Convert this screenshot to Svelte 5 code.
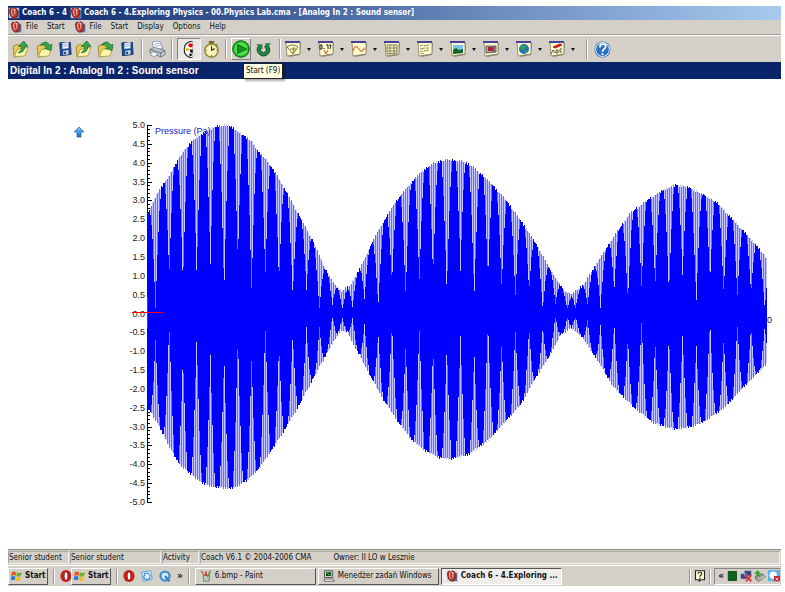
<script lang="ts">
	type Point = [number, number];

	// Upper and lower outline of the beats, in chart units.
	const upper: Point[] = [
		[139, 135], [149, 114], [160, 98], [174, 73], [186, 60], [198, 52], [209, 47], [220, 46],
		[232, 54], [244, 63], [250, 73], [259, 82], [270, 99], [285, 126], [305, 163], [315, 186],
		[324, 203], [333, 212], [342, 206], [352, 188], [369, 153], [385, 126], [399, 108], [412, 94],
		[425, 84], [437, 81], [454, 82], [465, 88], [479, 101], [495, 118], [512, 141], [530, 169],
		[539, 186], [555, 211], [563, 215], [575, 206], [589, 183], [605, 158], [622, 134], [639, 121],
		[655, 111], [668, 106], [679, 108], [692, 114], [709, 124], [725, 141], [745, 163], [759, 180]
	];
	const lower: Point[] = [
		[139, 328], [149, 344], [159, 364], [170, 384], [180, 393], [194, 404], [205, 408], [225, 409],
		[239, 401], [252, 388], [265, 368], [275, 353], [292, 324], [305, 299], [322, 268], [332, 251],
		[339, 253], [355, 284], [375, 321], [392, 346], [405, 363], [419, 373], [432, 379], [442, 380],
		[459, 376], [480, 361], [492, 348], [512, 326], [530, 294], [539, 281], [552, 256], [562, 249],
		[572, 256], [589, 281], [605, 308], [625, 328], [645, 344], [665, 350], [682, 348], [695, 343],
		[715, 329], [735, 308], [759, 284]
	];

	const zero = 234;
	const left = 139;
	const right = 758;

	const run = (start: number, step: number, n: number) =>
		Array.from({ length: n }, (_, i) => start + i * step);
	const gaps = [
		...run(147, 13.73, 12), 311, 324, 334, 344,
		...run(356, 13.72, 14), 547, 559, 567, 579,
		...run(592, 13.69, 13)
	];

	function at(points: Point[], x: number): number {
		const i = Math.max(1, points.findIndex((p) => p[0] >= x));
		const [x0, y0] = points[i - 1];
		const [x1, y1] = points[i];
		return y0 + ((y1 - y0) * (x - x0)) / (x1 - x0);
	}

	function level(x: number, seed: number): number {
		let best = 99;
		let index = 0;
		gaps.forEach((g, i) => {
			if (Math.abs(x - g) < Math.abs(best)) {
				best = x - g;
				index = i;
			}
		});
		const d = Math.abs(best) + 0.2 + Math.abs(Math.sin(index * 1.3 + seed));
		return d > 5.5 ? 1 : Math.sin((Math.PI * d) / 13.7);
	}

	let solid = '';
	let pale = '';
	let mid = '';
	for (let x = left; x <= right; x++) {
		const jitter = Math.round(Math.sin(x * 2.7) * 0.9);
		const top = Math.round(at(upper, x)) + jitter;
		const bottom = Math.round(at(lower, x)) + jitter;
		const a = Math.round(zero - Math.max(5, (zero - top) * level(x, 0)));
		const b = Math.round(zero + Math.max(5, (bottom - zero) * level(x, 2)));
		solid += `M${x} ${a}h1V${b}h-1z`;
		const strips = (a > top ? `M${x} ${top}h1V${a}h-1z` : '') + (b < bottom ? `M${x} ${b}h1V${bottom}h-1z` : '');
		if (x % 2) mid += strips;
		else pale += strips;
	}

	const labels = Array.from({ length: 21 }, (_, i) => ({
		text: (5 - i / 2).toFixed(1),
		y: 46 + i * 18.85
	}));
	const ticks = Array.from({ length: 101 }, (_, i) => `M139 ${Math.round(46 + i * 3.77)}h${i % 5 ? 3 : 5}v1h${i % 5 ? -3 : -5}z`).join('');

	const displays = ['meter', 'value', 'diagram', 'table', 'text', 'image', 'video', 'web', 'notes'];
</script>

{#snippet icon(name: string)}
	<svg class="icon" viewBox="0 0 16 16" aria-hidden="true">
		{#if name === 'coach'}
			<path d="M1 1h14v14H1z" fill="#c3cfe6" />
			<path d="M10 8l5-5v12h-7z" fill="#5573ad" />
			<path d="M2 4q1-4 4-2l2-1 3 1q3 3 2 8-2 6-6 5-5-2-5-11z" fill="#c0352a" stroke="#671712" />
			<path d="M5 3v6l2 3M9 3v7M6 2l4 2" stroke="#f5d8ce" stroke-width="1.2" fill="none" />
		{:else if name === 'open'}
			<path d="M1 5l4-2 2 2 5-1v9l-10 2z" fill="#e4cb55" stroke="#8c7722" stroke-width=".7" />
			<path d="M2 15l3-7 10-2-3 8z" fill="#fff6a7" stroke="#a08b35" stroke-width=".7" />
			<path d="M6 11q4-3 3-6H6l5-5 4 5h-3q0 6-6 6z" fill="#35a94b" stroke="#176b29" stroke-width=".7" />
		{:else if name === 'import'}
			<path d="M1 5l4-2 2 2 5-1v9l-10 2z" fill="#e4cb55" stroke="#8c7722" stroke-width=".7" />
			<path d="M2 15l3-7 10-2-3 8z" fill="#fff6a7" stroke="#a08b35" stroke-width=".7" />
			<path d="M4 4q5-6 9 0l2-1-1 6-6-2 2-1q-2-4-6-2z" fill="#35a94b" stroke="#176b29" stroke-width=".7" />
		{:else if name === 'save'}
			<path d="M2 1l12-1 1 14-12 2z" fill="#1c4b9a" stroke="#12315f" />
			<path d="M5 1l7-1v7l-7 1z" fill="#eef5fa" />
			<path d="M6 3l5-1M6 5l5-1" stroke="#8fa5ba" />
			<path d="M6 10l6-1v5l-6 1z" fill="#c8d6e2" />
			<path d="M7 11h2v3H7z" fill="#163b70" />
		{:else if name === 'print'}
			<path d="M3 1l7-1 3 7-8 2z" fill="#fff" stroke="#8da0b4" />
			<path d="M1 8l4-2 10 3v4l-4 2-10-4z" fill="#c6ccd1" stroke="#66727b" stroke-width=".8" />
			<path d="M1 8l10 3 4-2M11 11v4" stroke="#56636d" fill="none" stroke-width=".8" />
			<path d="M4 10l5 2-4 3-4-2z" fill="#edf3fa" stroke="#68798c" stroke-width=".6" />
			<path d="M5 3l5-1M6 5l5-1" stroke="#a9bdd0" />
		{:else if name === 'probe'}
			<path d="M11 0Q3 1 3 8t8 8z" fill="#fff" />
			<path d="M11 0Q3 1 3 8t8 8" fill="none" stroke="#222" />
			<path d="M11 1v14" stroke="#888" stroke-width=".6" />
			<circle cx="9" cy="4" r="2" fill="#e00" />
			<circle cx="6" cy="8" r="1.500" fill="#e9b600" />
			<path d="M8 8h3v3H9z" fill="#111" />
			<circle cx="9" cy="13" r="1.300" fill="#111" />
		{:else if name === 'watch'}
			<path d="M6 0h4v3H6zM12 3l2 2" fill="#776b24" stroke="#776b24" />
			<circle cx="8" cy="9" r="6.200" fill="#fcf6b8" stroke="#958a3b" stroke-width="1.500" />
			<path d="M8 9V5M8 9l3-2" stroke="#222" />
			<path d="M8 4v1M8 13v1M3 9h1M12 9h1" stroke="#8c7f43" />
		{:else if name === 'play'}
			<circle cx="8" cy="8" r="7.400" fill="#19b01d" stroke="#135b16" stroke-width=".8" />
			<circle cx="8" cy="8" r="6" fill="#4ee04c" />
			<path d="M5 4l8 4-8 4z" fill="#18951b" stroke="#0c6510" stroke-width=".8" />
		{:else if name === 'repeat'}
			<path d="M5 5q-3 4 0 6 3 3 6 0 3-3-1-7" fill="none" stroke="#124a25" stroke-width="4" />
			<path d="M5 5q-3 4 0 6 3 3 6 0 3-3-1-7" fill="none" stroke="#268447" stroke-width="2.500" />
			<path d="M1 3h6v5zM9 2h6l-3 4z" fill="#268447" />
		{:else if name === 'help'}
			<circle cx="8" cy="8" r="7.500" fill="#275b9e" />
			<circle cx="8" cy="8" r="6.500" fill="#2a70bf" stroke="#d5e8fc" />
			<path d="M5.500 6q0-3 3-3t2.500 2.500q0 1-1.500 2T8 10M8 11.500v1.700" stroke="#fff" stroke-width="1.700" fill="none" />
		{:else if displays.includes(name)}
			<path d="M2 2h14l-1 12-11 2z" fill="#868680" />
			<path d="M1 1h14v12L2 15z" fill="#fffbc9" stroke="#807e63" stroke-width=".8" />
			<path d="M0 0h15v2H0z" fill="#4a409c" />
			{#if name === 'meter'}
				<path d="M2 6q5-4 11 0L8 13zM8 12l1-6M5 8h6" stroke="#756937" fill="none" stroke-width=".9" />
			{:else if name === 'value'}
				<path d="M2 4h2v4H2zM6 7v1M8 4h2v4M12 8l1-4h-2" stroke="#222" fill="none" />
				<path d="M6 9l2 4 2-4" stroke="#d44" fill="none" />
			{:else if name === 'diagram'}
				<path d="M2 10q2-7 5-3t4 3l3-3" stroke="#dd7144" fill="none" stroke-width="1.200" />
			{:else if name === 'table'}
				<path d="M3 4h10v8l-10 1zM6 4v9M10 4v8M3 7h10M3 10h10" stroke="#706e4e" fill="none" stroke-width=".9" />
			{:else if name === 'text'}
				<path d="M3 5l3-1M7 5l5-1M3 8l5-1M9 7h3M3 11l3-1M7 10l5-1M4 13l3-1" stroke="#747150" stroke-width=".8" />
			{:else if name === 'image'}
				<path d="M3 4h10v8l-10 1z" fill="#7cc4ef" />
				<path d="M3 9l3-2 3 2 4-1v4l-10 1z" fill="#126629" />
			{:else if name === 'video'}
				<path d="M3 5h10v6l-10 1z" fill="#aaa" stroke="#444" stroke-width=".8" />
				<path d="M5 6h5v4H5z" fill="#bc1836" />
				<path d="M11 5v6" stroke="#333" />
			{:else if name === 'web'}
				<circle cx="8" cy="8" r="5" fill="#2870b5" />
				<path d="M6 4l4 1-1 3-3 1-2-2zM9 9l3 1-3 3z" fill="#31a84e" />
			{:else}
				<path d="M4 6l7-3 2 1-7 3z" fill="#d01818" stroke="#d01818" />
				<path d="M2 13l2-4 2 3M7 9v3h2V9zM13 8h-2v3h2" stroke="#333" fill="none" stroke-width=".8" />
			{/if}
		{:else if name === 'windows'}
			<path d="M1 3q3-2 6 0L6 8Q4 6 0 8z" fill="#ef5825" />
			<path d="M8 3q3 2 7 0l-2 5q-3 2-6 0z" fill="#68b42c" />
			<path d="M0 9q3-2 6 0l-1 5q-3-2-5 0z" fill="#2879d8" />
			<path d="M7 9q3 2 6 0l-1 5q-3 2-6 0z" fill="#f5bd25" />
		{:else if name === 'opera'}
			<ellipse cx="8" cy="8" rx="7.500" ry="8" fill="#c51d1c" />
			<ellipse cx="8" cy="8" rx="2.500" ry="5.500" fill="#fff" stroke="#831010" />
		{:else if name === 'mail'}
			<path d="M1 3l12-2 2 11-12 3z" fill="#d9f1ff" stroke="#3d8dca" />
			<path d="M4 5q7-3 8 3t-7 4q-3-3 1-6" stroke="#3b8bcb" stroke-width="1.500" fill="none" />
		{:else if name === 'quick'}
			<circle cx="8" cy="8" r="6" fill="#d5edfb" stroke="#3b91ce" stroke-width="3" />
			<path d="M8 8l6 7" stroke="#3482bd" stroke-width="3" />
		{:else if name === 'paint'}
			<path d="M4 7h9l-1 8H5z" fill="#b8c7bd" stroke="#617068" />
			<path d="M6 8L2 1" stroke="#bb6b31" stroke-width="2" />
			<path d="M8 8V2" stroke="#c22" stroke-width="2" />
			<path d="M10 9l4-8" stroke="#489339" stroke-width="2" />
		{:else if name === 'monitor'}
			<path d="M2 1h11v9H2z" fill="#d7d3c8" stroke="#333" />
			<path d="M4 3h7v5H4z" fill="#073c16" />
			<path d="M4 6l2-2 2 3 3-2" stroke="#40dc5b" fill="none" />
			<path d="M1 12h13l1 3H2z" fill="#eee" stroke="#555" />
		{:else if name === 'tip'}
			<path d="M2 1h12v12H9l-2 2v-2H2z" fill="#ffffdc" stroke="#222" stroke-width="1.500" />
			<path d="M5 5q1-2 3-2 3 0 2 3L8 8v1M8 10v2" stroke="#222" stroke-width="1.500" fill="none" />
		{:else if name === 'cpu'}
			<path d="M3 2h11v12H3z" fill="#075a17" stroke="#073712" />
			<path d="M3 6h11M3 10h11M6 2v12M10 2v12" stroke="#117628" />
		{:else if name === 'network'}
			<path d="M6 1h9v7H6zM1 5h8v7H1z" fill="#34417b" stroke="#9babc9" />
			<path d="M7 7l8 8M15 7l-7 8" stroke="#e52e32" stroke-width="2.500" />
		{:else if name === 'device'}
			<path d="M2 8l9-3 4 4-8 6-5-3z" fill="#999" stroke="#555" />
			<path d="M8 9q-5 0-5-4H0l5-5 4 5H6q0 2 3 2z" fill="#38a52d" />
			<path d="M5 12l8-4M7 14l7-5" stroke="#ddd" />
		{:else}
			<path d="M0 0h16v15H0z" fill="#5fb4e6" />
			<circle cx="7" cy="7" r="5" fill="#f4fbff" />
			<path d="M8 8h8v7H8z" fill="#c72332" />
			<path d="M10 10l4 4M14 10l-4 4" stroke="#fff" />
		{/if}
	</svg>
{/snippet}

<main>
	<header class="title">
		{@render icon('coach')}
		<span class="ghost">Coach 6 - 4</span>
		{@render icon('coach')}
		<span>Coach 6 - 4.Exploring Physics - 00.Physics Lab.cma - [Analog In 2 : Sound sensor]</span>
	</header>

	<nav class="menu">
		{@render icon('coach')}
		<button>File</button>
		<button>Start</button>
		{@render icon('coach')}
		<button>File</button>
		<button>Start</button>
		<button>Display</button>
		<button>Options</button>
		<button>Help</button>
	</nav>

	<div class="toolbar" role="toolbar" aria-label="Tools">
		<button class="tool" aria-label="Open activity">{@render icon('open')}</button>
		<button class="tool" aria-label="Open result">{@render icon('import')}</button>
		<button class="tool cut" aria-label="Save result">{@render icon('save')}</button>
		<button class="tool near" aria-label="Open activity">{@render icon('open')}</button>
		<button class="tool" aria-label="Open result">{@render icon('import')}</button>
		<button class="tool near small" aria-label="Save result">{@render icon('save')}</button>
		<span class="sep"></span>
		<button class="tool near" aria-label="Print">{@render icon('print')}</button>
		<span class="sep"></span>
		<button class="tool pressed" aria-label="Show panel" aria-pressed="true">{@render icon('probe')}</button>
		<button class="tool near" aria-label="Measurement settings">{@render icon('watch')}</button>
		<span class="sep"></span>
		<div class="start-tool">
			<button class="tool near hot" aria-describedby="start-tip" aria-label="Start">{@render icon('play')}</button>
			<span class="tooltip" id="start-tip" role="tooltip">Start (F9)</span>
		</div>
		<button class="tool" aria-label="Repeat">{@render icon('repeat')}</button>
		<span class="sep"></span>
		{#each displays as name}
			<button class="tool display" aria-label={name}>{@render icon(name)}<i class="arrow"></i></button>
		{/each}
		<span class="sep"></span>
		<button class="tool near" aria-label="Help">{@render icon('help')}</button>
	</div>

	<h1>Digital In 2 : Analog In 2 : Sound sensor</h1>

	<svg class="chart" viewBox="0 0 773 470" role="img" aria-label="Pressure (Pa)">
		<defs>
			<linearGradient id="arrow-fill" x2="0" y2="1">
				<stop stop-color="#80ccff" />
				<stop offset="1" stop-color="#176abd" />
			</linearGradient>
		</defs>
		<path d="M71 48l5 5h-3v5h-4v-5h-3z" fill="url(#arrow-fill)" stroke="#1c61a5" stroke-width=".7" />
		<g class="labels">
			{#each labels as label}
				<text x="137" y={label.y + 3}>{label.text}</text>
			{/each}
			<text x="764" y="244">0</text>
		</g>
		<g shape-rendering="crispEdges">
			<path d="M139 46h1v378h-1z" />
			<path d={ticks} />
			<path d={mid} fill="#6c6cff" />
			<path d={pale} fill="#c4c4ff" />
			<path d={solid} fill="#00f" />
			<path d="M124 233h31v1h-31zM139 218h1v31h-1z" fill="red" />
		</g>
		<text class="quantity" x="147" y="55">Pressure (Pa)</text>
	</svg>

	<footer class="status">
		<span class="cell user">Senior student</span>
		<span class="cell login">Senior student</span>
		<span class="cell mode">Activity</span>
		<span class="cell about"><span>Coach V6.1 © 2004-2006 CMA</span><span>Owner: II LO w Lesznie</span></span>
	</footer>

	<div class="taskbar">
		<button class="start">{@render icon('windows')}Start</button>
		<span class="sep"></span>
		<span class="clip">{@render icon('opera')}</span>
		<button class="start">{@render icon('windows')}Start</button>
		<span class="sep"></span>
		<div class="quick">
			<button aria-label="Opera">{@render icon('opera')}</button>
			<button aria-label="Mail">{@render icon('mail')}</button>
			<button aria-label="QuickTime">{@render icon('quick')}</button>
			<button class="more">»</button>
		</div>
		<span class="sep"></span>
		<div class="tasks">
			<button class="task">{@render icon('paint')}6.bmp - Paint</button>
			<button class="task">{@render icon('monitor')}Menedżer zadań Windows</button>
			<button class="task active">{@render icon('coach')}Coach 6 - 4.Exploring ...</button>
		</div>
		<div class="notify">
			<span class="sep"></span>
			{@render icon('tip')}
			<span class="sep"></span>
			<div class="tray">
				<button class="more">«</button>
				{@render icon('cpu')}
				{@render icon('network')}
				{@render icon('device')}
				{@render icon('disc')}
			</div>
		</div>
	</div>
</main>

<style>
	:global(body) {
		margin: 0;
		background: #fff;
	}

	main {
		margin: 6px 4px 6px 8px;
		overflow: hidden;
		font: 8px/12px 'DejaVu Sans Condensed', 'DejaVu Sans', sans-serif;
		color: #111;
	}

	button {
		padding: 0;
		border: 0;
		background: none;
		font: inherit;
		color: inherit;
	}

	.icon {
		display: block;
		flex: none;
		width: 12px;
		height: 12px;
	}

	.title {
		display: flex;
		align-items: center;
		gap: 2px;
		height: 14px;
		background: linear-gradient(90deg, #0a246a, #a6caf0);
		color: #fff;
		font-weight: bold;
		white-space: nowrap;
	}

	.ghost {
		width: 46px;
		overflow: hidden;
	}

	.menu {
		display: flex;
		align-items: center;
		gap: 9px;
		height: 14px;
		padding-left: 2px;
		border-bottom: 1px solid #a09d96;
		background: #d4d0c8;
	}

	.menu .icon {
		margin-right: -5px;
	}

	.toolbar {
		display: flex;
		align-items: center;
		height: 26px;
		border-top: 1px solid #fff;
		background: #d4d0c8;
	}

	.tool {
		display: flex;
		flex: none;
		align-items: center;
		justify-content: center;
		width: 24px;
		height: 22px;
	}

	.tool .icon {
		width: 17px;
		height: 17px;
	}

	.tool.near {
		width: 20px;
	}

	.tool.cut {
		width: 17px;
	}

	.tool.cut .icon,
	.tool.small .icon {
		width: 14px;
		height: 14px;
	}

	.tool.pressed {
		border: 1px solid;
		border-color: #808080 #fff #fff #808080;
		box-sizing: border-box;
		background: #eae8e3;
	}

	.tool.hot {
		border: 1px solid;
		border-color: #fff #808080 #808080 #fff;
		box-sizing: border-box;
	}

	.tool.hot .icon {
		width: 18px;
		height: 18px;
	}

	.tool.display {
		gap: 6px;
		justify-content: flex-start;
		width: 33px;
	}

	.tool.display .icon {
		width: 16px;
		height: 16px;
	}

	.arrow {
		width: 0;
		border: 2px solid transparent;
		border-top: 3px solid #111;
		border-bottom: 0;
	}

	.sep {
		flex: none;
		width: 1px;
		height: 20px;
		margin: 0 4px;
		border-right: 1px solid #fff;
		background: #999;
	}

	.start-tool {
		position: relative;
	}

	.tooltip {
		position: absolute;
		top: 25px;
		left: 12px;
		z-index: 1;
		padding: 1px 2px;
		border: 1px solid #222;
		background: #ffffe1;
		box-shadow: 2px 2px 2px #0005;
		white-space: nowrap;
	}

	h1 {
		margin: 0;
		padding-left: 2px;
		background: #0a246a;
		color: #fff;
		font: bold 10px/17px 'Liberation Sans', sans-serif;
	}

	.chart {
		display: block;
		width: 100%;
		height: auto;
		font: 9px 'Liberation Sans', sans-serif;
	}

	.labels {
		text-anchor: end;
		fill: #222;
	}

	.quantity {
		fill: #2424c4;
	}

	.status {
		display: flex;
		height: 15px;
		border-top: 1px solid #888;
		background: #d4d0c8;
		white-space: nowrap;
	}

	.cell {
		margin: 1px 1px 1px 0;
		border: 1px solid;
		border-color: #aaa69e #f2f0ec #f2f0ec #aaa69e;
		box-sizing: border-box;
	}

	.user {
		width: 61px;
	}

	.login {
		width: 91px;
	}

	.mode {
		width: 37px;
	}

	.about {
		display: flex;
		flex: 1;
		gap: 22px;
	}

	.taskbar {
		display: flex;
		align-items: center;
		height: 20px;
		border-top: 1px solid #fff;
		background: #d4d0c8;
		white-space: nowrap;
	}

	.start,
	.task {
		display: flex;
		align-items: center;
		gap: 2px;
		height: 17px;
		padding: 0 2px;
		border: 1px solid;
		border-color: #fff #555 #555 #fff;
		box-sizing: border-box;
	}

	.start {
		flex: none;
		width: 40px;
		font-weight: bold;
	}

	.taskbar .sep {
		height: 15px;
		margin: 0 5px;
	}

	.clip {
		width: 11px;
		overflow: hidden;
	}

	.quick {
		display: flex;
		align-items: center;
		gap: 6px;
	}

	.more {
		font-size: 10px;
		font-weight: bold;
	}

	.tasks {
		display: flex;
		flex: 0 1 367px;
		gap: 2px;
		min-width: 0;
	}

	.task {
		flex: 1;
		gap: 3px;
		padding-left: 4px;
		overflow: hidden;
	}

	.task.active {
		border-color: #555 #fff #fff #555;
		background: #f0eeea;
		font-weight: bold;
	}

	.notify {
		display: flex;
		align-items: center;
		margin-left: auto;
	}

	.notify .sep {
		margin: 0 3px;
	}

	.tray {
		display: flex;
		align-items: center;
		gap: 2px;
		height: 17px;
		padding-left: 3px;
		border: 1px solid;
		border-color: #888 transparent #fff #888;
		box-sizing: border-box;
	}
</style>
